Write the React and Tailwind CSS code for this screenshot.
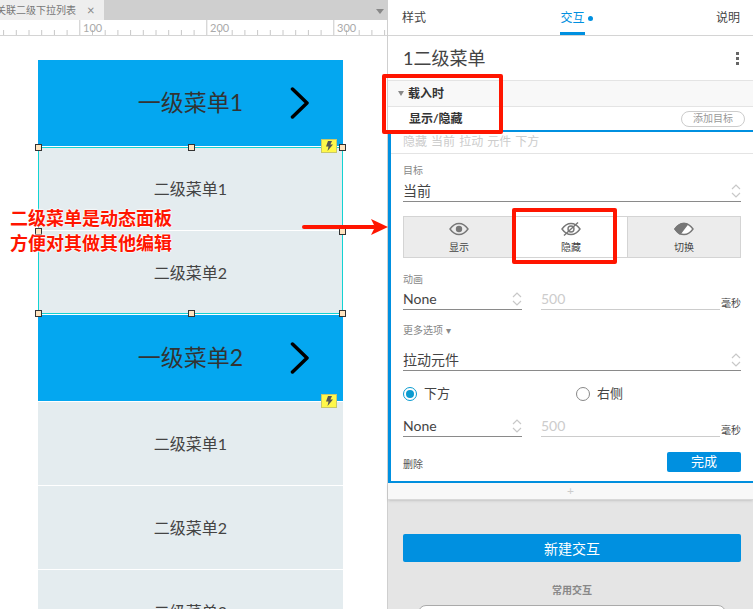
const font = { fontFamily: 'Lato, "Noto Sans CJK SC", sans-serif' };

const Handle = ({ className }) => (
    <div className={`absolute w-[7px] h-[7px] bg-[#ffe4bf] border border-[#333] ${className}`} />
);

const Bolt = ({ className }) => (
    <div className={`absolute w-[16px] h-[14px] bg-[#fff84a] border border-[#c8c86a] flex items-center justify-center ${className}`}>
        <svg width="8" height="10" viewBox="0 0 8 10"><path d="M3 0h4L5.400 3.500H8L2.500 10l1-4.500H1z" fill="#555" /></svg>
    </div>
);

const Primary = ({ label }) => (
    <div className="h-[86px] bg-[#04a7f0] flex items-center justify-center relative pb-[1px]">
        <span className="text-[23px] text-[#333] leading-none">{label}</span>
        <svg className="absolute left-[252px] top-[27px]" width="20" height="32" viewBox="0 0 20 32" fill="none" stroke="#000" strokeWidth="3.500" strokeLinecap="round" strokeLinejoin="round">
            <path d="M2.500 2L17 16 2.500 30" />
        </svg>
    </div>
);

const Secondary = ({ label }) => (
    <div className="h-[83px] bg-[#e4ecef] flex items-center justify-center">
        <span className="text-[16px] text-[#444] leading-none">{label}</span>
    </div>
);

const Ruler = () => {
    const ticks = [];
    for (let i = 0; i < 31; i++) {
        const x = 3.6 + i * 12.7;
        const major = i % 10 === 6;
        ticks.push(<line key={i} x1={x} x2={x} y1={major ? 0 : 10} y2="15" stroke="#c8c8c8" />);
    }
    return (
        <div className="relative h-[16px] shrink-0 bg-white border-b border-[#d4d4d4] text-[11px] text-[#aaa] leading-none">
            <svg width="387" height="15" className="absolute left-0 top-0">{ticks}</svg>
            <span className="absolute left-[83px] top-[2px]">100</span>
            <span className="absolute left-[210px] top-[2px]">200</span>
            <span className="absolute left-[337px] top-[2px]">300</span>
        </div>
    );
};

const Updown = () => (
    <svg width="10" height="16" viewBox="0 0 10 16" fill="none" stroke="#c8c8c8" strokeWidth="1.2">
        <path d="M1 6l4-4 4 4M1 10l4 4 4-4" />
    </svg>
);

const Select = ({ label, className }) => (
    <div className={`flex items-center justify-between border-b border-[#8a8a8a] h-[22px] text-[14px] text-[#444] ${className}`}>
        <span>{label}</span>
        <Updown />
    </div>
);

const Duration = () => (
    <div className="flex items-end gap-[1px] ml-[19px] flex-1">
        <div className="flex-1 border-b border-[#ccc] h-[22px] text-[14px] text-[#ccc] leading-[22px]">500</div>
        <span className="text-[10px] text-[#444] leading-none -translate-y-[2px]">毫秒</span>
    </div>
);

const Eye = ({ kind }) => (
    <svg width="20" height="14" viewBox="0 0 20 14" fill="none" stroke="#777" strokeWidth="1.4">
        <path d="M1 7c2.500-3.500 5.500-5.500 9-5.500S16.500 3.500 19 7c-2.500 3.500-5.500 5.500-9 5.500S3.500 10.500 1 7z" fill={kind === 'toggle' ? '#fff' : 'none'} />
        {kind === 'show' && <circle cx="10" cy="7" r="3.2" fill="#777" stroke="none" />}
        {kind === 'hide' && <circle cx="10" cy="7" r="3" />}
        {kind === 'hide' && <path d="M3 13.500L17 .5" />}
        {kind === 'toggle' && <path d="M1 7c2.500-3.500 5.500-5.500 9-5.500 1.500 0 2.500.3 3.500.8L6 12C4 11 2.500 9 1 7z" fill="#777" />}
    </svg>
);

const ModeButton = ({ kind, label, active, className }) => (
    <div className={`flex flex-col items-center justify-center gap-[6px] h-[42px] border border-[#d4d4d4] ${active ? 'bg-white' : 'bg-[#ececec]'} ${className}`}>
        <Eye kind={kind} />
        <span className="text-[10px] text-[#444] leading-none">{label}</span>
    </div>
);

const Label = ({ children, className }) => (
    <div className={`text-[10px] text-[#888] leading-none ${className}`}>{children}</div>
);

const App = () => (
    <div className="relative w-[753px] h-[609px] overflow-hidden flex bg-white" style={font}>
        {/* canvas side */}
        <div className="w-[387px] shrink-0 flex flex-col">
            <div className="h-[20px] bg-[#cfcfcf] flex items-center relative shrink-0">
                <div className="w-[104px] h-full bg-[#eeeeee] flex items-center overflow-hidden">
                    <span className="text-[10px] text-[#777] whitespace-nowrap -ml-[4px]">关联二级下拉列表</span>
                    <span className="text-[13px] text-[#888] ml-[11px] leading-none">×</span>
                </div>
                <div className="absolute right-[3px] top-[9px] w-0 h-0 border-x-[4px] border-x-transparent border-t-[5px] border-t-[#888]" />
            </div>
            <Ruler />
            <div className="pl-[38px] pt-[24px] w-[343px] shrink-0">
                <Primary label="一级菜单1" />
                <div className="flex flex-col gap-[1px] pt-[1px]">
                    <Secondary label="二级菜单1" />
                    <Secondary label="二级菜单2" />
                </div>
                <div className="pt-[1px]">
                    <Primary label="一级菜单2" />
                </div>
                <div className="flex flex-col gap-[1px] pt-[1px]">
                    <Secondary label="二级菜单1" />
                    <Secondary label="二级菜单2" />
                    <Secondary label="二级菜单3" />
                </div>
            </div>
        </div>

        {/* interaction panel */}
        <div className="flex-1 border-l border-[#cfcfcf] bg-[#e5e5e5] flex flex-col">
            <div className="bg-white shrink-0">
                <div className="h-[36px] flex items-start justify-between px-[14px] border-b border-[#d4d4d4] text-[12px] text-[#444] relative">
                    <span className="mt-[12px] leading-none">样式</span>
                    <span className="mt-[12px] leading-none text-[#0090e0] border-b-[3px] border-[#0090e0] pb-[8px] h-[23px] flex ml-[3px] relative">
                        交互
                        <span className="absolute -right-[8px] top-[4px] w-[5px] h-[5px] rounded-full bg-[#0090e0]" />
                    </span>
                    <span className="mt-[12px] leading-none -mr-[1px]">说明</span>
                </div>
                <div className="h-[44px] flex items-center justify-between pl-[15px] pr-[14px] text-[18px] text-[#444]">
                    <span>1二级菜单</span>
                    <div className="flex flex-col gap-[2px]">
                        <span className="w-[3px] h-[3px] bg-[#666]" />
                        <span className="w-[3px] h-[3px] bg-[#666]" />
                        <span className="w-[3px] h-[3px] bg-[#666]" />
                    </div>
                </div>
                <div className="h-[27px] bg-[#f8f8f8] border-y border-[#e4e4e4] flex items-center pl-[10px] gap-[3px] text-[12px] font-bold text-[#333]">
                    <span className="w-0 h-0 border-x-[3px] border-x-transparent border-t-[5px] border-t-[#888]" />
                    <span className="ml-[1px]">载入时</span>
                </div>
                <div className="h-[23px] flex items-center justify-between pl-[21px] pr-[8px] text-[12px] font-bold text-[#333]">
                    <span>显示/隐藏</span>
                    <span className="w-[64px] h-[16px] rounded-full border border-[#ccc] text-[10px] font-normal text-[#999] flex items-center justify-center">添加目标</span>
                </div>
                <div className="h-[353px] border-l-[3px] border-y-2 border-[#0090e0] pl-[12px] pr-[12px]">
                    <div className="-mx-[12px] px-[12px] h-[22px] border-b border-[#e4e4e4] text-[12px] text-[#ccc] leading-[19px] [word-spacing:1px]">隐藏 当前 拉动 元件 下方</div>
                    <Label className="mt-[11px]">目标</Label>
                    <Select label="当前" className="mt-[5px]" />
                    <div className="flex mt-[14px]">
                        <ModeButton kind="show" label="显示" className="w-[112px]" />
                        <ModeButton kind="hide" label="隐藏" active className="w-[112px] border-l-0 border-r-0" />
                        <ModeButton kind="toggle" label="切换" className="flex-1" />
                    </div>
                    <Label className="mt-[16px]">动画</Label>
                    <div className="flex mt-[4px]">
                        <Select label="None" className="w-[119px]" />
                        <Duration />
                    </div>
                    <Label className="mt-[15px]">更多选项 ▾</Label>
                    <Select label="拉动元件" className="mt-[14px]" />
                    <div className="flex items-center h-[16px] mt-[15px] text-[13px] text-[#444]">
                        <span className="w-[14px] h-[14px] rounded-full border border-[#0a9bd0] flex items-center justify-center">
                            <span className="w-[8px] h-[8px] rounded-full bg-[#0a9bd0]" />
                        </span>
                        <span className="ml-[7px] w-[152px]">下方</span>
                        <span className="w-[14px] h-[14px] rounded-full border border-[#888]" />
                        <span className="ml-[7px]">右侧</span>
                    </div>
                    <div className="flex mt-[13px]">
                        <Select label="None" className="w-[119px]" />
                        <Duration />
                    </div>
                    <div className="flex items-center justify-between mt-[15px]">
                        <span className="text-[10px] text-[#555] translate-y-[2px]">删除</span>
                        <span className="w-[74px] h-[20px] rounded-[2px] bg-[#0090e0] text-white text-[13px] flex items-center justify-center">完成</span>
                    </div>
                </div>
            </div>
            <div className="h-[17px] shrink-0 bg-[#f8f8f8] border-b border-[#d8d8d8] shadow-sm flex items-center justify-center text-[12px] text-[#ccc] leading-none">+</div>
            <div className="pl-[15px] pr-[12px] shrink-0">
                <div className="h-[28px] mt-[34px] rounded-[2px] bg-[#0090e0] text-white text-[14px] flex items-center justify-center">新建交互</div>
                <div className="mt-[23px] text-center text-[10px] font-bold text-[#888] leading-none">常用交互</div>
                <div className="h-[20px] mt-[10px] mx-[15px] rounded-t-[8px] bg-white border border-[#aaa]" />
            </div>
        </div>

        {/* overlays */}
        <div className="absolute left-[38px] top-[147px] w-[305px] h-[167px] border border-[#13d3d3] pointer-events-none" />
        <Handle className="left-[35px] top-[144px]" />
        <Handle className="left-[188px] top-[144px]" />
        <Handle className="left-[339px] top-[144px]" />
        <Handle className="left-[35px] top-[228px]" />
        <Handle className="left-[339px] top-[228px]" />
        <Handle className="left-[35px] top-[310px]" />
        <Handle className="left-[188px] top-[310px]" />
        <Handle className="left-[339px] top-[310px]" />
        <Bolt className="left-[321px] top-[139px]" />
        <Bolt className="left-[321px] top-[394px]" />

        <div className="absolute left-[10px] top-[206px] text-[18px] leading-[25px] font-bold text-[#ff1500] [text-shadow:0_0_2px_#fff,0_0_2px_#fff,0_0_2px_#fff]">
            <div>二级菜单是动态面板</div>
            <div>方便对其做其他编辑</div>
        </div>
        <svg className="absolute left-[302px] top-[218px]" width="86" height="18" viewBox="0 0 86 18">
            <path d="M2 9h70" stroke="#ff1500" strokeWidth="4" strokeLinecap="round" />
            <path d="M69 1l17 8-17 8 4-8z" fill="#ff1500" />
        </svg>
        <div className="absolute left-[382px] top-[74px] w-[121px] h-[60px] border-[4px] border-[#ff1500] rounded-[2px]" />
        <div className="absolute left-[512px] top-[208px] w-[105px] h-[56px] border-[4px] border-[#ff1500] rounded-[2px]" />
    </div>
);

export default App;
